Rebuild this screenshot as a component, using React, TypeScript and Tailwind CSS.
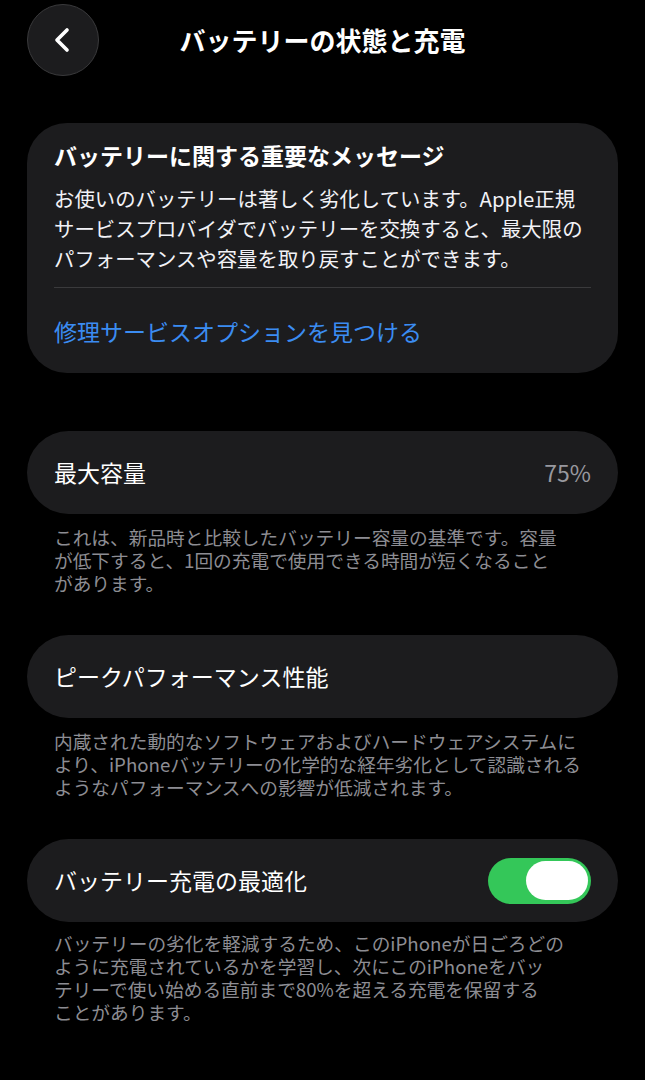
import { ChevronLeft } from 'lucide-react'

const FONT = { fontFamily: '"Noto Sans CJK JP", "Noto Sans", sans-serif' }

function Footnote({ lines, className = 'mt-[11px]' }: { lines: string[]; className?: string }) {
  return (
    <p className={`${className} px-[27px] text-[18.7px] leading-[23px] text-[#8d8d93]`}>
      {lines.map((l, i) => (
        <span key={i} className="block whitespace-nowrap">
          {l}
        </span>
      ))}
    </p>
  )
}

function Row({ children }: { children: React.ReactNode }) {
  return (
    <div className="flex h-[83px] items-center justify-between rounded-[42px] bg-[#1c1c1e] px-[27px]">
      {children}
    </div>
  )
}

export default function App() {
  return (
    <div className="min-h-[1080px] w-[645px] bg-black text-white" style={FONT}>
      <header className="grid h-[80px] grid-cols-[1fr_auto_1fr] items-center px-[27px]">
        <button className="flex h-[72px] w-[72px] items-center justify-center rounded-full border border-[#3a3a3c] bg-[#1c1c1e]">
          <ChevronLeft size={40} strokeWidth={2.2} className="-ml-[3px] text-white" />
        </button>
        <h1 className="text-[26px] font-bold leading-none">バッテリーの状態と充電</h1>
        <div />
      </header>

      <main className="px-[27px] pt-[43px]">
        <section className="rounded-[40px] bg-[#1c1c1e] px-[27px] pt-[17px] pb-[27px]">
          <h2 className="text-[23px] font-bold leading-[30px]">バッテリーに関する重要なメッセージ</h2>
          <p className="mt-[13px] text-[20.4px] leading-[30px] text-[#f2f2f7]">
            <span className="block whitespace-nowrap">お使いのバッテリーは著しく劣化しています。Apple正規</span>
            <span className="block whitespace-nowrap">サービスプロバイダでバッテリーを交換すると、最大限の</span>
            <span className="block whitespace-nowrap">パフォーマンスや容量を取り戻すことができます。</span>
          </p>
          <div className="mt-[14px] h-px bg-[#3a3a3c]" />
          <a className="mt-[28px] block text-[23px] leading-[30px] text-[#3b8cf2]">修理サービスオプションを見つける</a>
        </section>

        <div className="mt-[58px]">
          <Row>
            <span className="text-[23px]">最大容量</span>
            <span className="text-[23px] text-[#98989f]">75%</span>
          </Row>
          <Footnote
            lines={[
              'これは、新品時と比較したバッテリー容量の基準です。容量',
              'が低下すると、1回の充電で使用できる時間が短くなること',
              'があります。',
            ]}
          />
        </div>

        <div className="mt-[41px]">
          <Row>
            <span className="text-[23px]">ピークパフォーマンス性能</span>
          </Row>
          <Footnote
            lines={[
              '内蔵された動的なソフトウェアおよびハードウェアシステムに',
              'より、iPhoneバッテリーの化学的な経年劣化として認識される',
              'ようなパフォーマンスへの影響が低減されます。',
            ]}
          />
        </div>

        <div className="mt-[41px]">
          <Row>
            <span className="text-[23px]">バッテリー充電の最適化</span>
            <div className="flex h-[46px] w-[103px] items-center justify-end rounded-full bg-[#34c759] pr-[3px]">
              <div className="h-[39px] w-[62px] rounded-full bg-white" />
            </div>
          </Row>
          <Footnote
            className="mt-[9px]"
            lines={[
              'バッテリーの劣化を軽減するため、このiPhoneが日ごろどの',
              'ように充電されているかを学習し、次にこのiPhoneをバッ',
              'テリーで使い始める直前まで80%を超える充電を保留する',
              'ことがあります。',
            ]}
          />
        </div>
      </main>
    </div>
  )
}
